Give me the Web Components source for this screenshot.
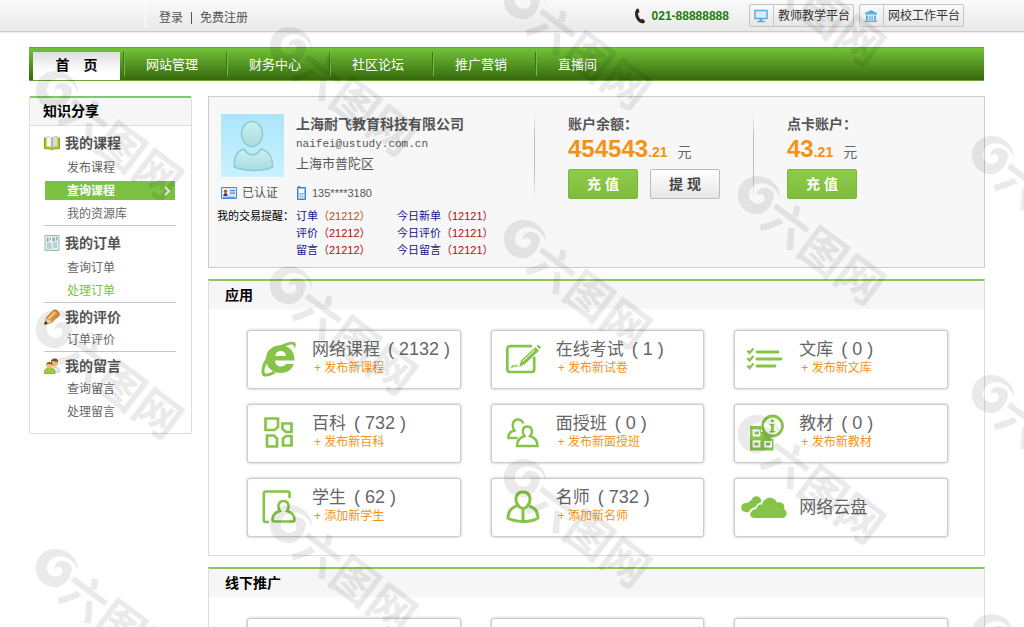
<!DOCTYPE html>
<html lang="zh-CN">
<head>
<meta charset="utf-8">
<title>知识分享</title>
<style>
html, body { margin: 0; height: 100%; }
body { position: relative; overflow: hidden; background: #fff; color: #555; font: 12px/20px "Liberation Sans", "Noto Sans CJK SC", sans-serif; }
</style>
</head>
<body>
<study-app></study-app>

<script>
const define = (name, html, setup) => {
  const template = document.createElement('template');
  template.innerHTML = html;
  customElements.define(name, class extends HTMLElement {
    constructor() {
      super();
      this.attachShadow({ mode: 'open' }).append(template.content.cloneNode(true));
    }
    connectedCallback() { if (setup) setup(this, this.shadowRoot); }
  });
};

const G = '#86c447';
const ICONS = {
  phone: ['0 0 12 16', 12, 16, '<path d="M2.600 1 4.500.4l1 3.800-1.600 1c.2 2.600 1.200 4.500 3.200 6.200l1.800-.7 2.300 2.700-1.300 1.900C5.600 16 1.100 11.500 1.100 5.800 1.100 3.800 1.600 2 2.600 1z" fill="#2b2423"/>'],
  monitor: ['0 0 14 14', 14, 14, '<path d="M1 1.500h12v8H1z" fill="#d8eefb" stroke="#5aaee0" stroke-width="1.500"/><path d="M5.500 10h3v2H11v1.300H3V12h2.500z" fill="#5aaee0"/>'],
  bank: ['0 0 14 14', 14, 14, '<path d="M7 1l6 3v1.500H1V4zM2 6.500h2V11H2zM5.200 6.500h1.300V11H5.200zM7.500 6.500h1.300V11H7.500zM10 6.500h2V11h-2zM1 11.500h12V13H1z" fill="#5aaee0"/>'],
  book: ['0 0 16 16', 16, 16, '<path d="M.5 3v10.500l6 .5 1.500 1 1.500-1 6-.5V3z" fill="#a6d01c" stroke="#7ea612"/><path d="M2.500 1.500C5 1.200 7 2 8 3v9.500c-1.500-1-3.500-1.300-5.500-1z" fill="#f6f6ee" stroke="#c4c4b0" stroke-width=".6"/><path d="M13.500 1.500C11 1.200 9 2 8 3v9.500c1.500-1 3.500-1.300 5.500-1z" fill="#dcdcd2" stroke="#b9b9a4" stroke-width=".6"/><path d="M7.500 3h1v10h-1z" fill="#9b9b88"/>'],
  order: ['0 0 16 16', 16, 16, '<path d="M1 .5h14v15H1z" fill="#e2eff0" stroke="#9ab6b8"/><path d="M3 2.500h1.500V7H3zM6 2.500h1V5H6zM8.500 2.500H11V6H8.500zM12 2h1.500v3.500H12zM3 8.500h4.500v1H3zM3 10.500h4.500v1H3zM3 12.500h4.500v1H3zM9 7.500h4v1H9zM9 9.500h4v1H9zM9 11.500h4v1H9z" fill="#8fb0b4"/>'],
  pencil: ['0 0 16 16', 16, 16, '<path d="M.5 15.500 2.500 8.500 9.500 1.300Q11 .2 13 1.500L15 4q1 1.700-.3 3L7.500 13.500z" fill="#eb9440" stroke="#b96a22" stroke-width=".8"/><path d="M3.500 9 10 2.300l2 1.800-6.600 7z" fill="#ffd08a"/><path d="M2.500 8.800.5 15.500l6.700-2.200-1.200-2-2-.4z" fill="#f6dfb8"/><path d="M1.500 12 .4 15.600l3.500-1.100z" fill="#3c2a1c"/>'],
  people: ['0 0 16 16', 16, 16, '<path d="M7 14.500c0-4 1.500-5.500 4-5.500s4.500 1.500 4.500 5z" fill="#e4edf4" stroke="#9db3c4" stroke-width=".7"/><circle cx="10.500" cy="5" r="3.500" fill="#edb56c"/><path d="M7 5c-.5-3.500 1.800-4.500 4-4.500 2.500 0 3.500 2 3 4.500l-1-1.500c-2 0-4-.5-4.500-.8z" fill="#655027"/><path d="M.5 15.500c-.5-4 1.500-5.500 5-5.500s6 1.500 5.500 5.500z" fill="#9cce35" stroke="#6c9f1d" stroke-width=".7"/><circle cx="5.500" cy="7.700" r="3" fill="#f3be76"/><path d="M2.500 7.500C2 4.500 4 4 5.500 4s3.800 1 3 3.800L7.500 6.300C5.800 6.300 4 6 3.500 6z" fill="#8a5a22"/>'],
  idcard: ['0 0 16 12', 16, 12, '<path d="M.5.500h15v11H.5z" fill="#d9eafb" stroke="#4d87d8"/><path d="M2 2h5v7.500H2z" fill="#fff"/><circle cx="4.500" cy="4.200" r="1.700" fill="#b0552a"/><path d="M2.300 9c0-4 4.400-4 4.400 0z" fill="#273f88"/><path d="M9 3h5v1.300H9zM9 5.500h5v1.300H9zM2 9.800h12v.9H2z" fill="#4d87d8"/>'],
  mobile: ['0 0 11 14', 11, 14, '<path d="M1.500 1.500h8v12h-8z" fill="#8cc0f5" stroke="#3f80d5"/><path d="M2 0h2v2H2z" fill="#3f80d5"/><path d="M3 3h5v4H3z" fill="#fff"/><path d="M3 8.500h1.300v1.200H3zM5 8.500h1.300v1.200H5zM7 8.500h1.300v1.200H7zM3 10.700h1.300v1.200H3zM5 10.700h1.300v1.200H5zM7 10.700h1.300v1.200H7z" fill="#fff"/>'],
  avatar: ['0 0 63 63', 63, 63, '<defs><linearGradient id="sky" x2="0" y2="1"><stop stop-color="#abe5fb"/><stop offset="1" stop-color="#c9f1ff"/></linearGradient><linearGradient id="body" x2="0" y2="1"><stop stop-color="#c9f0f0"/><stop offset="1" stop-color="#a9dce0"/></linearGradient></defs><path d="M0 0h63v63H0z" fill="url(#sky)"/><path d="M13.500 53c-1-9 2-16 9.500-18 4.500 7.500 12.500 7.500 17 0 8 2 12 9 11.500 18-9 4.500-29 4.500-38 0z" fill="url(#body)" stroke="#8ccbd2" stroke-width="1.500"/><ellipse cx="31" cy="20" rx="10.500" ry="12.500" fill="url(#body)" stroke="#8ccbd2" stroke-width="1.500"/>'],
  ie: ['0 0 36 38', 36, 38, `<path d="M33.500 20.500H14c.3 4 3 6 6 6 2.300 0 4-.9 4.800-2.500h8c-2 6-7 9-13 9C11.500 33 5 27.500 5 19S11.500 5.200 19.500 5.200c8.700 0 14.300 6.300 14 15.300zM25 16c-.2-3-2.500-4.900-5.300-4.900-3 0-5.200 1.900-5.500 4.900z" fill="${G}"/><path d="M1.200 26.500C3.500 17 13 7.800 24 3.300 30 1 34.500 1 34.700 4c.1 1.700-.5 3.600-1.500 5.500.5-3-.2-5-2.700-5C25 4.500 9 15 4.500 26.500c-2 5-1.200 7.500 2 7 1.500-.3 3.500-1.200 5.500-2.500l3 2C8.500 36.500 3 38 1.200 35c-1-1.700-.8-5 0-8.500z" fill="${G}"/>`],
  exam: ['0 0 36 32', 36, 32, `<path d="M27 3.200H5q-2.700 0-2.700 2.600v20.400Q2.300 29 5 29h21.500q2.700 0 2.700-2.600V14" fill="none" stroke="${G}" stroke-width="2.700"/><path d="M14 24l2-6.500L30.500 4l3.500 3.700L20 21z" fill="${G}"/><path d="M17.500 18.500 29.500 7.300" stroke="#fff"/><path d="M31.500 3l1.500-1.500 3 2.800L34.500 6z" fill="${G}"/><path d="M6 25l2-3v2.500l3-3v2.500l2-1.500" fill="none" stroke="${G}" stroke-width="1"/>`],
  list: ['0 0 40 24', 40, 24, `<path d="M11 5h21M11 12h24M11 19h18" fill="none" stroke="${G}" stroke-width="2.800" stroke-linecap="round"/><path d="M1.500 3.500 3.500 6l4-4.500M1.500 11l2 2.500 4-4.500M1.500 18.500l2 2.500 4-4.500" fill="none" stroke="${G}" stroke-width="2.200"/>`],
  wiki: ['0 0 30 32', 30, 32, `<path d="M1.500 1.500H14v8.500l-3.500 3H1.500zM18.500 6.500h9V15H22l-3.500-3zM3 18.500h7l3 3v8H3zM19 21.500l3-2.500h5.500v9.500H19z" fill="none" stroke="${G}" stroke-width="2.700"/>`],
  classes: ['0 0 32 30', 32, 30, `<path d="M10.500 20H1.500c-.5-4 2-6.500 6-7.500C4 7 6 1.500 11 1.500c3 0 4.500 1.700 5.300 4" fill="none" stroke="${G}" stroke-width="2.400"/><path d="M17.500 18c-5 1.500-7.500 4.500-7.500 10h20.500c0-5.500-2.500-8.500-7.500-10 3.500-4 2-9.500-2.800-9.500S14.500 14 17.500 18z" fill="none" stroke="${G}" stroke-width="2.400"/>`],
  material: ['0 0 36 38', 36, 38, `<path d="M13 12H2v24.500h23.500V25H13z" fill="${G}"/><path d="M5.500 16.500h6v5h-6zM5.500 27.500h6v5h-6zM17 27.500h6v5h-6z" fill="${G}" stroke="#fff" stroke-width="1.800"/><path d="M13 18h10v9H13z" fill="${G}"/><circle cx="24.500" cy="12" r="10" fill="#fff" stroke="${G}" stroke-width="2.800"/><path d="M23 5.500h3v2.500h-3zM21.500 10h4.300v7h1.700v1.500h-6V17H23v-5.500h-1.500z" fill="${G}"/>`],
  student: ['0 0 34 34', 34, 34, `<path d="M27.500 8V2.800Q27.500 1.500 26 1.500H4Q1.800 1.500 1.800 4v26q0 2 2 2H7" fill="none" stroke="${G}" stroke-width="2.600"/><path d="M18 21c-5 1.500-7.500 4-7.500 8.500 0 1.500.5 2 2 2h18c1.500 0 2-.5 2-2 0-4.500-2.500-7-7.500-8.500 3-4.500 1.500-10-3.500-10S15 16.500 18 21z" fill="none" stroke="${G}" stroke-width="2.600"/>`],
  teacher: ['0 0 34 34', 34, 34, `<path d="M12 15C7 18 2.500 18.500 2 28c6 4.500 24 4.500 30 0-.5-9.500-5-10-10-13 4-5.500 2-13-5-13S8 9.500 12 15z" fill="none" stroke="${G}" stroke-width="3"/><path d="M12 16l5 3 5-3M17 19v12" fill="none" stroke="${G}" stroke-width="3"/>`],
  cloud: ['0 0 50 22', 50, 22, `<path d="M8 16C2 17 0 14 .3 11 .5 8 3 6.500 6 7c2-1 3-2 4.500-3 2-5 8-5 10 .5-1 4-5 4-6 7-4 .5-5.500 2-6.500 4.500z" fill="${G}"/><path d="M14 22c-7 0-6-8.500 1-9 1-4 3.500-5 6-4.500 2-8 12-9 15-2 5-1 8.500 2 7 6.500 4 2.500 3.500 8-1.500 9z" fill="${G}"/><path d="M9 17c1-3.500 3-4.800 6-5 1-3.500 3.500-4.800 6-4.500" fill="none" stroke="#fff" stroke-width="1.300"/>`],
  arrow: ['0 0 8 12', 8, 12, '<path d="M2 2l4 4-4 4" fill="none" stroke="#fff" stroke-width="1.800"/>'],
  swirl: ['0 0 48 44', 48, 44, '<path d="M38 21C35 36 25 42 15 38 5 35 1 26 2 17 4 6 14-1 26 1.500c10 2 18 10 18 21-3-7-8-13-16-14-9-1.500-16 5-15 13 1 6 8 9 13 6 3-2 3.500-6 1-8-2-1.500-5-.5-6 2-1-6 3-9 8-8.500 6 .5 9 4 9 8z" fill="#000"/>']
};

define('ui-icon', `
<style>:host { display: inline-flex; flex: none } svg { display: block }</style>`,
(el, root) => {
  const [box, w, h, body] = ICONS[el.getAttribute('name')];
  const holder = document.createElement('template');
  holder.innerHTML = `<svg aria-hidden="true" viewBox="${box}" width="${w}" height="${h}">${body}</svg>`;
  root.append(holder.content);
});

define('platform-button', `
<style>
:host { display: block }
button { display: flex; align-items: center; height: 23px; padding: 0; border: 1px solid #c4c4c4; border-radius: 2px; background: linear-gradient(#fafafa, #e6e6e6); color: #333; font: inherit; cursor: pointer; white-space: nowrap }
.icon { display: flex; align-items: center; justify-content: center; width: 23px; height: 21px; border-right: 1px solid #c8c8c8 }
.label { padding: 0 3px 0 4px }
</style>
<button type="button"><span class="icon"><slot name="icon"></slot></span><span class="label"><slot></slot></span></button>`);

define('top-bar', `
<style>
:host { display: flex; align-items: flex-start; height: 31px; padding: 0 60px 0 145px; border-bottom: 1px solid #ccc; background: linear-gradient(#fafafa, #e9e9e9); box-shadow: 0 1px 1px #eee }
nav { display: flex; gap: 8px; padding: 8px 0 0 13px; border-left: 1px solid #fff; flex: 1; height: 20px }
a { color: #555; text-decoration: none }
.bar { width: 1px; height: 12px; margin-top: 4px; background: #555 }
.phone { display: flex; align-items: center; gap: 6px; margin: 6px 20px 0 0; color: #237a0c; font-weight: bold }
.tools { display: flex; gap: 5px; padding-top: 4px }
</style>
<nav><a href="#login">登录</a><span class="bar"></span><a href="#join">免费注册</a></nav>
<div class="phone"><ui-icon name="phone"></ui-icon>021-88888888</div>
<div class="tools">
<platform-button><ui-icon slot="icon" name="monitor"></ui-icon>教师教学平台</platform-button>
<platform-button><ui-icon slot="icon" name="bank"></ui-icon>网校工作平台</platform-button>
</div>`);

define('main-nav', `
<style>
:host { display: block; background: linear-gradient(#73c238, #35690c); border: 1px solid #6aa43c; border-width: 1px 0 }
nav { display: flex; height: 32px; padding-left: 4px; font-size: 13px; line-height: 34px }
a { box-sizing: border-box; width: 103px; padding-left: 23px; color: #fff; text-decoration: none; background: linear-gradient(#3b7710, #3b7710) 0 4px / 1px 24px no-repeat, linear-gradient(#79b84a, #79b84a) 1px 4px / 1px 24px no-repeat }
a.on { width: 87px; margin: 4px 3px 0 0; padding: 0; text-align: center; line-height: 26px; background: linear-gradient(#dedede, #fff 70%); color: #000; font-size: 14px; font-weight: bold; white-space: pre }
</style>
<nav>
<a class="on" href="#home">首　页</a><a href="#site">网站管理</a><a href="#finance">财务中心</a><a href="#forum">社区论坛</a><a href="#promo">推广营销</a><a href="#live">直播间</a>
</nav>`);

define('menu-item', `
<style>
:host { display: flex; flex-direction: column; justify-content: center; height: 23px }
a { display: flex; align-items: center; justify-content: space-between; height: 19px; margin: 0 1px; padding: 0 4px 0 22px; color: #666; text-decoration: none }
ui-icon { display: none }
:host([active]) a { background: #7cc142; color: #fff; font-weight: bold }
:host([active]) ui-icon { display: flex }
:host([fresh]) a { color: #7cc142 }
</style>
<a href="#item"><span><slot></slot></span><ui-icon name="arrow"></ui-icon></a>`);

define('menu-group', `
<style>
:host { display: block; padding-top: 3px; border-bottom: 1px solid #c4c4c4 }
:host(:last-child) { border: 0 }
h3 { display: flex; align-items: center; gap: 5px; height: 27px; margin: 0; color: #555; font-size: 14px }
:host([compact]) h3 { height: 22px }
</style>
<h3><slot name="icon"></slot><slot name="title"></slot></h3>
<slot></slot>`);

define('side-menu', `
<style>
:host { box-sizing: border-box; display: block; width: 163px; border: 1px solid #ddd; border-top: 2px solid #86c95b; border-radius: 2px; background: #fff }
h2 { margin: 0; padding-left: 13px; background: #f6f6f6; border-bottom: 1px solid #ddd; color: #000; font-size: 14px; line-height: 27px }
.groups { padding: 0 15px 10px 14px }
</style>
<h2>知识分享</h2>
<div class="groups">
<menu-group><ui-icon slot="icon" name="book"></ui-icon><span slot="title">我的课程</span><menu-item>发布课程</menu-item><menu-item active>查询课程</menu-item><menu-item>我的资源库</menu-item></menu-group>
<menu-group><ui-icon slot="icon" name="order"></ui-icon><span slot="title">我的订单</span><menu-item>查询订单</menu-item><menu-item fresh>处理订单</menu-item></menu-group>
<menu-group compact><ui-icon slot="icon" name="pencil"></ui-icon><span slot="title">我的评价</span><menu-item>订单评价</menu-item></menu-group>
<menu-group compact><ui-icon slot="icon" name="people"></ui-icon><span slot="title">我的留言</span><menu-item>查询留言</menu-item><menu-item>处理留言</menu-item></menu-group>
</div>`);

define('pay-button', `
<style>
:host { display: block }
button { width: 70px; height: 30px; padding: 0; border: 1px solid #7ab63a; border-radius: 2px; background: linear-gradient(#8dcb4b, #80bd3c); color: #fff; font: bold 14px/28px "Liberation Sans", "Noto Sans CJK SC", sans-serif; cursor: pointer }
:host([plain]) button { border-color: #bbb; background: linear-gradient(#fff, #e6e6e6); color: #444 }
</style>
<button type="button"><slot></slot></button>`);

define('account-balance', `
<style>
:host { display: block; padding: 16px 0 0 34px; background: linear-gradient(transparent, #bbb 30%, #bbb 70%, transparent) 0 14px / 1px 88px no-repeat }
h3 { margin: 0; color: #555; font-size: 14px; line-height: 22px }
.sum { display: flex; align-items: baseline; line-height: 28px; height: 34px; color: #f39315; font-weight: bold; font-size: 24px }
.cents { font-size: 14px }
.unit { margin-left: 10px; color: #666; font-size: 14px; font-weight: normal }
.actions { display: flex; gap: 12px }
</style>
<h3><slot name="label"></slot></h3>
<div class="sum"><slot name="yuan"></slot><span class="cents"><slot name="cents"></slot></span><span class="unit">元</span></div>
<div class="actions"><slot></slot></div>`);

define('profile-panel', `
<style>
:host { display: grid; grid-template-columns: 325fr 219fr 231fr; border: 1px solid #ccc; background: #f7f7f7; min-height: 170px }
.me { display: grid; grid-template-columns: 79px 1fr; align-content: start; padding: 17px 0 0 8px }
.pic { display: flex; padding-left: 4px }
h2 { margin: 0; color: #555; font-size: 14px; line-height: 20px }
.mail { font: 11px/20px "Liberation Mono", monospace }
.area { font-size: 13px }
.tag { display: flex; align-items: center; gap: 5px; height: 31px }
.tag.id { padding-left: 4px }
.tel { font-size: 11px }
.note, table { color: #000; font-size: 11px; line-height: 17px; white-space: nowrap }
table { border-collapse: collapse; justify-self: start }
td { padding: 0; min-width: 101px; width: 101px }
a { color: #14148c; text-decoration: none }
b { font-weight: normal; color: #b00c10 }
b.warm { color: #b8501a }
</style>
<div class="me">
<div class="pic"><ui-icon name="avatar"></ui-icon></div>
<div><h2>上海耐飞教育科技有限公司</h2><div class="mail">naifei@ustudy.com.cn</div><div class="area">上海市普陀区</div></div>
<div class="tag id"><ui-icon name="idcard"></ui-icon>已认证</div>
<div class="tag tel"><ui-icon name="mobile"></ui-icon>135****3180</div>
<div class="note">我的交易提醒：</div>
<table>
<tr><td><a href="#o">订单<b class="warm">（21212）</b></a></td><td><a href="#o">今日新单<b>（12121）</b></a></td></tr>
<tr><td><a href="#r">评价<b>（21212）</b></a></td><td><a href="#r">今日评价<b>（12121）</b></a></td></tr>
<tr><td><a href="#m">留言<b>（21212）</b></a></td><td><a href="#m">今日留言<b>（12121）</b></a></td></tr>
</table>
</div>
<account-balance><span slot="label">账户余额：</span><span slot="yuan">454543</span><span slot="cents">.21</span><pay-button>充 值</pay-button><pay-button plain>提 现</pay-button></account-balance>
<account-balance><span slot="label">点卡账户：</span><span slot="yuan">43</span><span slot="cents">.21</span><pay-button>充 值</pay-button></account-balance>`);

define('app-card', `
<style>
:host { box-sizing: border-box; display: grid; grid-template-columns: 62px 1fr; align-items: center; height: 59px; border: 1px solid #ccc; border-radius: 3px; background: #fff; box-shadow: 0 0 3px #bbb }
.icon { display: flex; justify-content: center; padding-bottom: 2px }
.text { padding: 0 0 4px 2px; white-space: nowrap }
:host([bare]) .text { padding-bottom: 0 }
h3 { margin: 0; color: #666; font-size: 17px; font-weight: normal; line-height: 20px }
::slotted(b) { margin-left: 8px; font-size: 18px; font-weight: normal }
a { display: block; padding-left: 2px; color: #f39315; line-height: 17px; text-decoration: none }
:host([bare]) a { display: none }
</style>
<div class="icon"><slot name="icon"></slot></div>
<div class="text"><h3><slot></slot></h3><a href="#add"><slot name="action"></slot></a></div>`);

define('panel-section', `
<style>
:host { display: block; border: 1px solid #ddd; border-top: 2px solid #86c95b; background: #fff }
h2 { margin: 0; padding-left: 16px; background: #f6f6f6; color: #000; font-size: 14px; line-height: 28px }
.grid { display: grid; grid-template-columns: repeat(3, 1fr); gap: 15px 30px; padding: 21px 36px 18px 38px }
</style>
<h2><slot name="title"></slot></h2>
<div class="grid"><slot></slot></div>`);

define('water-mark', `
<style>
:host { position: absolute; left: var(--x); top: var(--y); display: flex; opacity: .08; pointer-events: none; color: #000 }
span { position: absolute; left: 34px; top: 8px; font: bold 46px/50px "Noto Sans CJK SC", sans-serif; white-space: nowrap; transform-origin: 0 50%; transform: rotate(37deg) }
</style>
<ui-icon name="swirl"></ui-icon><span>六图网</span>`);

define('mark-layer', `
<style>:host { position: absolute; inset: 0; overflow: hidden; pointer-events: none }</style>`,
(el, root) => {
  [92, 48, 2, -42, -82].forEach((top, col) => {
    for (let y = top; y < 660; y += 239) {
      const mark = document.createElement('water-mark');
      mark.style.setProperty('--x', (34 + col * 234) + 'px');
      mark.style.setProperty('--y', (y - 22) + 'px');
      root.append(mark);
    }
  });
});

define('study-app', `
<style>
:host { display: block }
.page { padding: 15px 39px 0 29px }
main-nav { margin-right: 1px }
.body { display: flex; align-items: flex-start; gap: 16px; padding-top: 15px }
.main { flex: 1; min-width: 0; display: flex; flex-direction: column; gap: 11px }
</style>
<top-bar></top-bar>
<div class="page">
<main-nav></main-nav>
<div class="body">
<side-menu></side-menu>
<div class="main">
<profile-panel></profile-panel>
<panel-section><span slot="title">应用</span>
<app-card><ui-icon slot="icon" name="ie"></ui-icon>网络课程<b>( 2132 )</b><span slot="action">+ 发布新课程</span></app-card>
<app-card><ui-icon slot="icon" name="exam"></ui-icon>在线考试<b>( 1 )</b><span slot="action">+ 发布新试卷</span></app-card>
<app-card><ui-icon slot="icon" name="list"></ui-icon>文库<b>( 0 )</b><span slot="action">+ 发布新文库</span></app-card>
<app-card><ui-icon slot="icon" name="wiki"></ui-icon>百科<b>( 732 )</b><span slot="action">+ 发布新百科</span></app-card>
<app-card><ui-icon slot="icon" name="classes"></ui-icon>面授班<b>( 0 )</b><span slot="action">+ 发布新面授班</span></app-card>
<app-card><ui-icon slot="icon" name="material"></ui-icon>教材<b>( 0 )</b><span slot="action">+ 发布新教材</span></app-card>
<app-card><ui-icon slot="icon" name="student"></ui-icon>学生<b>( 62 )</b><span slot="action">+ 添加新学生</span></app-card>
<app-card><ui-icon slot="icon" name="teacher"></ui-icon>名师<b>( 732 )</b><span slot="action">+ 添加新名师</span></app-card>
<app-card bare><ui-icon slot="icon" name="cloud"></ui-icon>网络云盘</app-card>
</panel-section>
<panel-section><span slot="title">线下推广</span><app-card bare></app-card><app-card bare></app-card><app-card bare></app-card></panel-section>
</div>
</div>
</div>
<mark-layer></mark-layer>`);
</script>
</body>
</html>
